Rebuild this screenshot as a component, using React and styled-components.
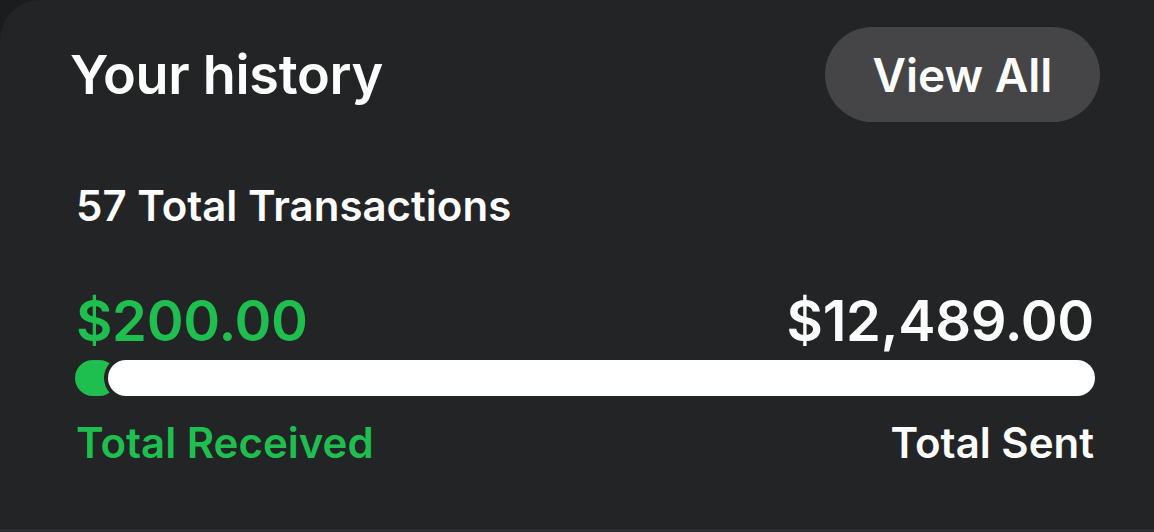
import React from 'react'
import styled, { createGlobalStyle } from 'styled-components'

// CSS
const GlobalStyle = createGlobalStyle`
    html, body {
        margin: 0;
        padding: 0;
        background-color: #1b1c1e;
    }
    body {
        font-family: "Inter", "Open Sans", sans-serif;
    }
`

const Card = styled.div`
    width: 1154px;
    height: 532px;
    box-sizing: border-box;
    background-color: #232426;
    border-top-left-radius: 40px;
    border-bottom: 3px solid #2c2d30;
    padding: 27px 54px 0 70px;
    color: #fcfcfc;
    overflow: hidden;
`

const Header = styled.div`
    display: flex;
    justify-content: space-between;
    align-items: center;
    height: 95px;
`

const Title = styled.h1`
    margin: 0;
    font-size: 54px;
    font-weight: 600;
    letter-spacing: -0.3px;
`

const ViewAllButton = styled.button`
    height: 95px;
    width: 275px;
    border: none;
    border-radius: 48px;
    background-color: #454547;
    color: #fcfcfc;
    font-family: inherit;
    font-size: 46px;
    font-weight: 600;
    cursor: pointer;
`

const Count = styled.div`
    margin: 59px 0 0 6px;
    font-size: 42px;
    font-weight: 600;
    line-height: 50px;
`

const AmountRow = styled.div`
    display: flex;
    justify-content: space-between;
    align-items: flex-end;
    margin: 60px 6px 0 6px;
`

const Amount = styled.span`
    font-size: 56px;
    font-weight: 600;
    line-height: 60px;
    letter-spacing: -0.3px;
    color: ${props => props.$green ? '#1fbf4f' : '#fcfcfc'};
`

const Track = styled.div`
    display: flex;
    align-items: center;
    height: 36px;
    margin: 9px 5px 0 5px;
`

const ReceivedBar = styled.div`
    flex: none;
    height: 36px;
    border-radius: 18px;
    background-color: #1fbf4f;
`

const SentBar = styled.div`
    flex: 1;
    height: 36px;
    border-radius: 18px;
    background-color: #ffffff;
    box-shadow: 0 0 0 4px #232426;
    margin-left: -9px;
`

const LabelRow = styled.div`
    display: flex;
    justify-content: space-between;
    margin: 22px 6px 0 6px;
`

const Label = styled.span`
    font-size: 42px;
    font-weight: 600;
    line-height: 50px;
    color: ${props => props.$green ? '#1fbf4f' : '#fcfcfc'};
`

function App() {
    const received = 200
    const sent = 12489
    const receivedWidth = Math.max(42, (received / (received + sent)) * 1010)

    return (
        <>
            <GlobalStyle />
            <Card>
                <Header>
                    <Title>Your history</Title>
                    <ViewAllButton>View All</ViewAllButton>
                </Header>
                <Count>57 Total Transactions</Count>
                <AmountRow>
                    <Amount $green>$200.00</Amount>
                    <Amount>$12,489.00</Amount>
                </AmountRow>
                <Track>
                    <ReceivedBar style={{ width: receivedWidth }} />
                    <SentBar />
                </Track>
                <LabelRow>
                    <Label $green>Total Received</Label>
                    <Label>Total Sent</Label>
                </LabelRow>
            </Card>
        </>
    )
}

export default App
